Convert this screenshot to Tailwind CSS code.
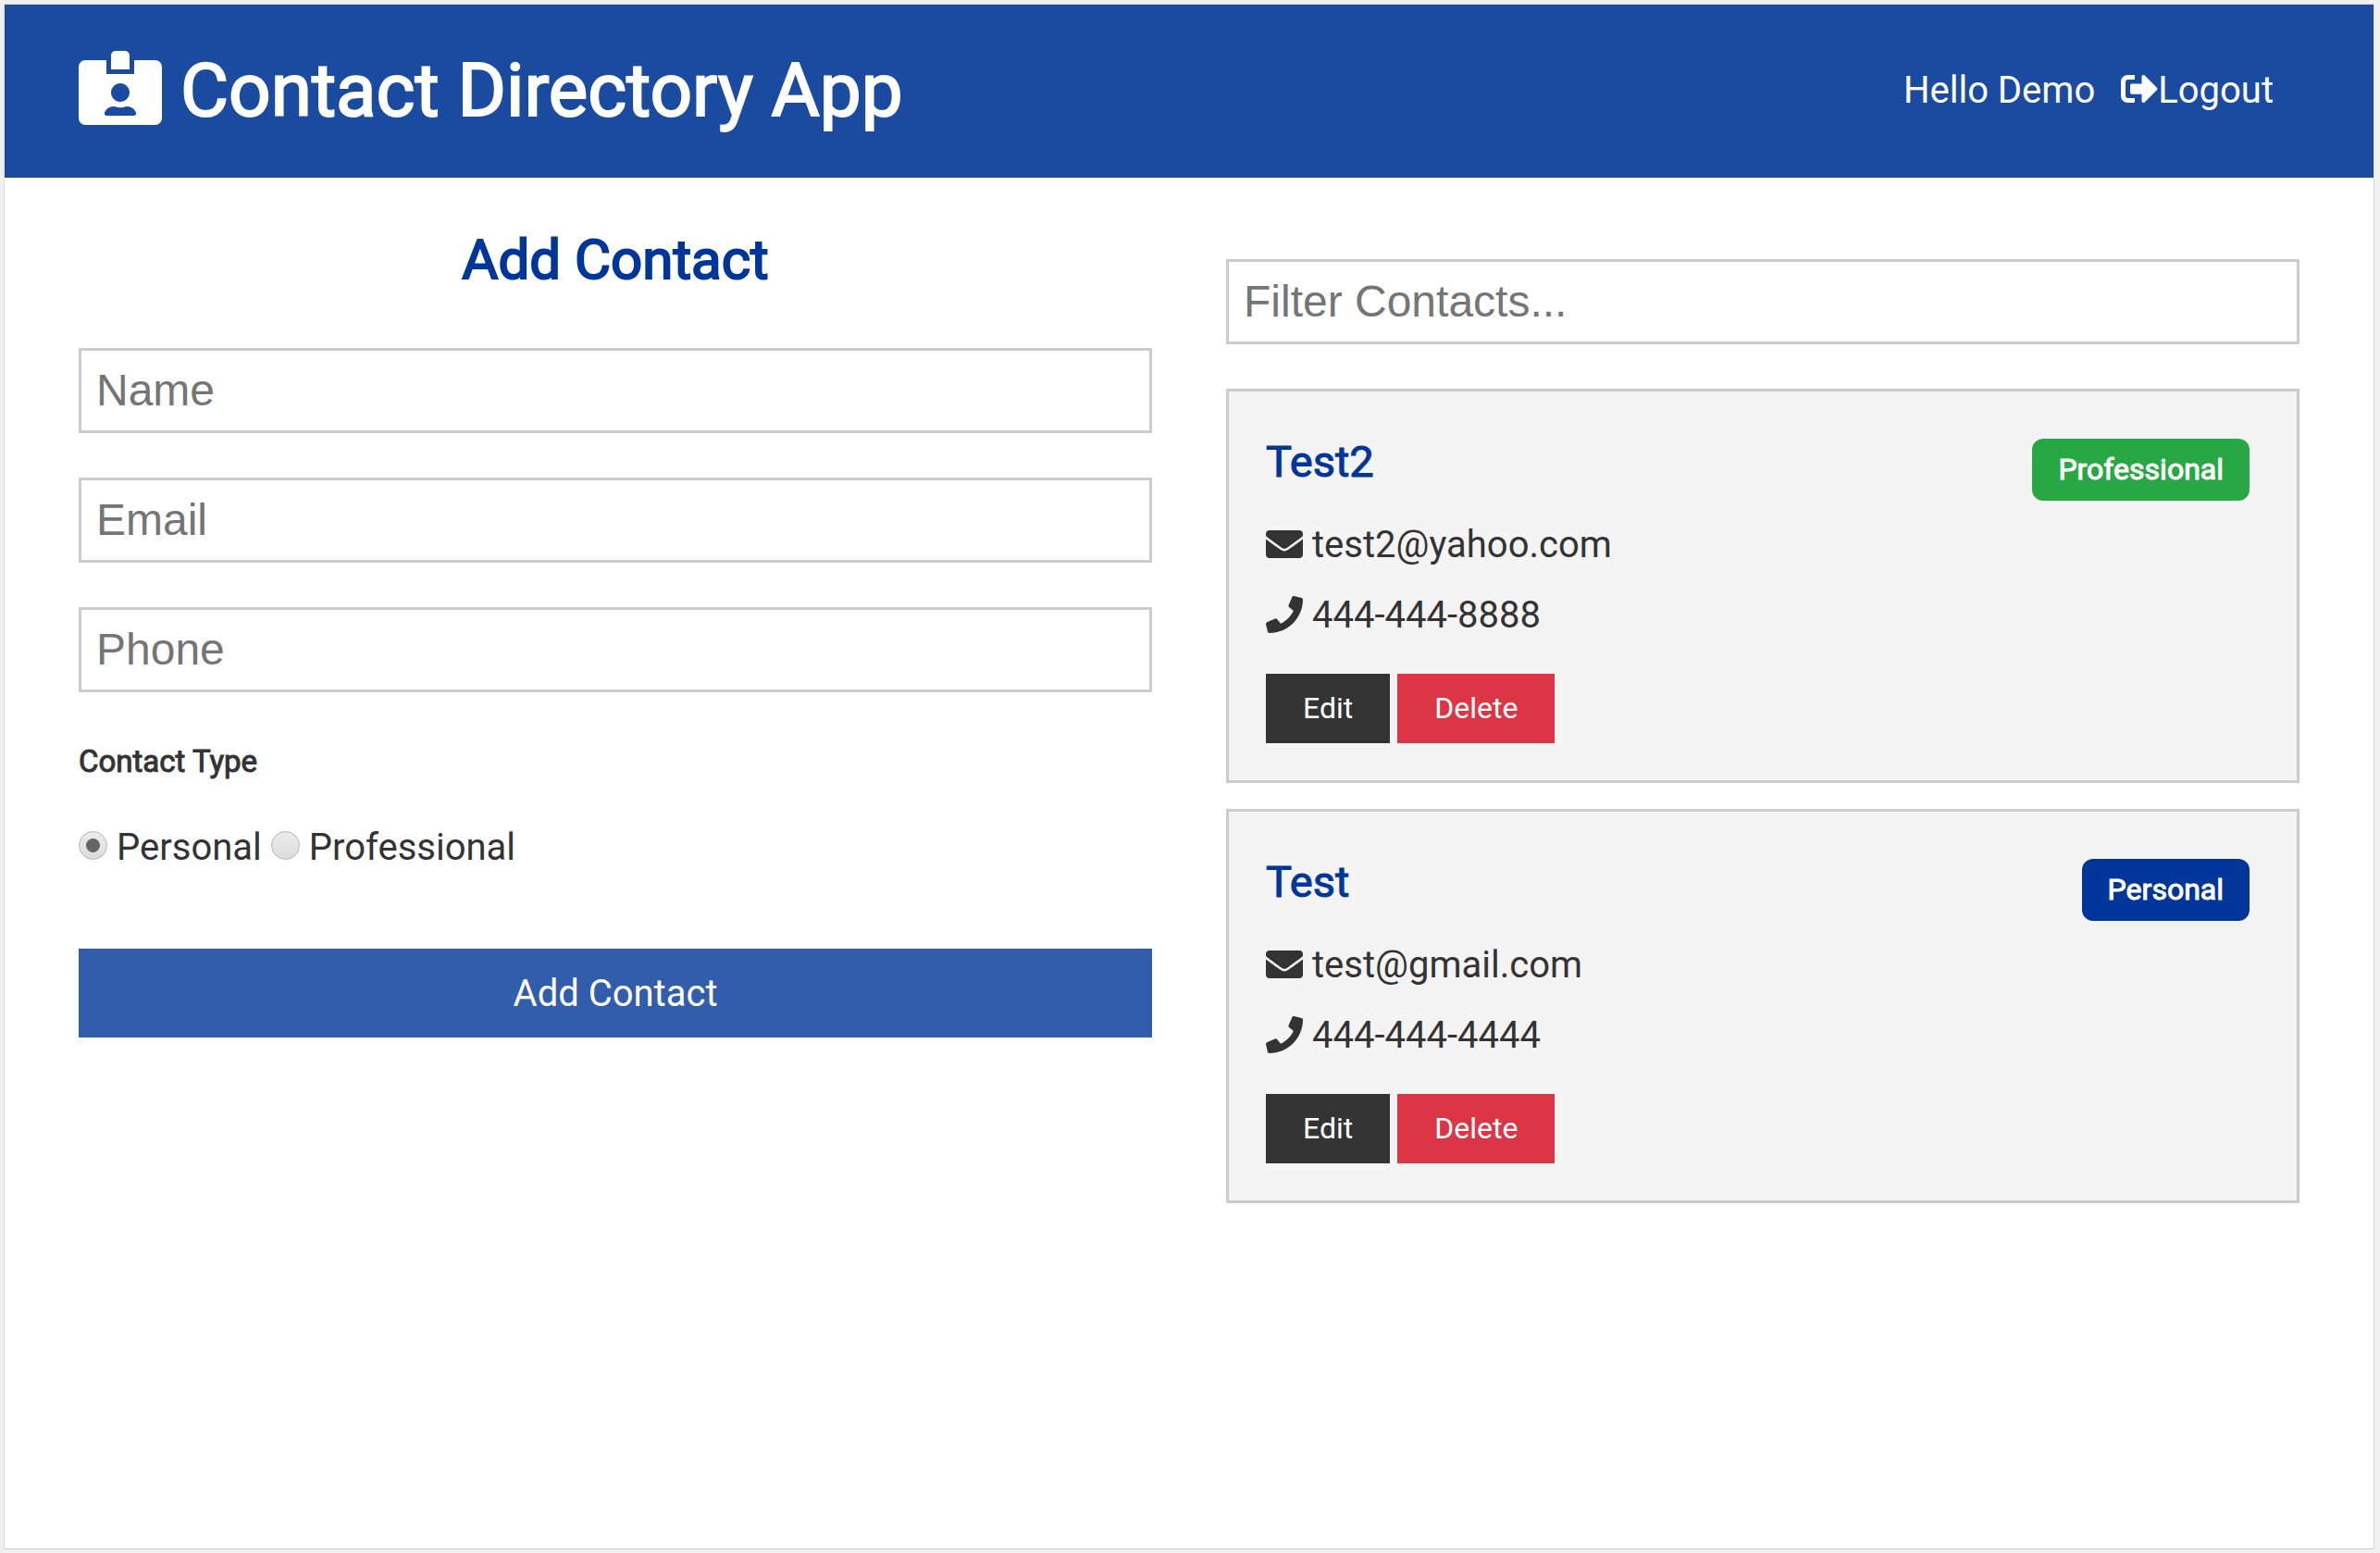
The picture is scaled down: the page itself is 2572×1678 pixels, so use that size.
<!DOCTYPE html>
<html lang="en">
<head>
<meta charset="utf-8">
<meta name="viewport" content="width=device-width, initial-scale=1">
<title>Contact Directory App</title>
<script src="https://cdn.jsdelivr.net/npm/@tailwindcss/browser@4"></script>
</head>
<body class="flex min-h-screen bg-[#f0f0f0] pt-[5px] pr-[7px] pb-[5px] pl-[5px] font-[Roboto,sans-serif] text-[40px] leading-[64px] text-[#333]">
<svg class="hidden" aria-hidden="true">
  <symbol id="icon-envelope" viewBox="0 0 512 512"><path d="M502.3 190.8c3.9-3.1 9.7-.2 9.7 4.7V400c0 26.5-21.5 48-48 48H48c-26.5 0-48-21.5-48-48V195.6c0-5 5.7-7.8 9.7-4.7 22.4 17.4 52.1 39.5 154.1 113.6 21.1 15.4 56.7 47.8 92.2 47.6 35.7.3 72-32.8 92.3-47.6 102-74.1 131.6-96.3 154-113.7zM256 320c23.2.4 56.6-29.2 73.4-41.4 132.7-96.3 142.8-104.7 173.4-128.7 5.8-4.5 9.2-11.5 9.2-18.9v-19c0-26.5-21.5-48-48-48H48c-26.5 0-48 21.5-48 48v19c0 7.4 3.4 14.3 9.2 18.9 30.6 23.9 40.7 32.4 173.4 128.7 16.8 12.2 50.2 41.8 73.4 41.4z"/></symbol>
  <symbol id="icon-phone" viewBox="0 0 512 512"><path d="M493.4 24.6l-104-24c-11.3-2.6-22.9 3.3-27.5 13.9l-48 112c-4.2 9.8-1.4 21.3 6.9 28l60.6 49.6c-36 76.7-98.9 140.5-177.2 177.2l-49.6-60.6c-6.8-8.3-18.2-11.1-28-6.9l-112 48C3.9 366.5-2 378.1.6 389.4l24 104C27.1 504.2 36.7 512 48 512c256.1 0 464-207.5 464-464 0-11.2-7.7-20.9-18.6-23.4z"/></symbol>
</svg>
<div class="min-w-0 grow bg-white shadow-[0_1px_0_0_#cccccc,0_0_0_1px_#dddddd]">
  <header class="flex items-center justify-between bg-[#1b4ba1] py-7 pr-[108px] pl-20 text-white">
    <h1 class="flex items-center gap-5 text-[80px] leading-[131px] [-webkit-text-stroke:2px]">
      <svg class="mb-2 h-20 w-[90px] shrink-0 [-webkit-text-stroke:0]" viewBox="0 0 576 512" fill="currentColor" aria-hidden="true"><path d="M528 64H384v96H192V64H48C21.5 64 0 85.5 0 112v352c0 26.500 21.500 48 48 48h480c26.500 0 48-21.500 48-48V112c0-26.500-21.500-48-48-48zM288 224c35.300 0 64 28.700 64 64s-28.700 64-64 64-64-28.700-64-64 28.700-64 64-64zm93.300 224H194.700c-10.400 0-18.800-10-15.600-19.800 8.300-25.600 32.400-44.200 60.900-44.200h8.200c12.300 5.100 25.700 8 39.800 8s27.600-2.900 39.800-8h8.200c28.400 0 52.500 18.500 60.900 44.200 3.200 9.900-5.200 19.800-15.600 19.800zM352 32c0-17.700-14.300-32-32-32h-64c-17.700 0-32 14.300-32 32v96h128V32z"/></svg>
      Contact Directory App
    </h1>
    <nav class="flex items-center gap-7 pb-0.5">
      <span>Hello Demo</span>
      <a href="#" class="flex items-center">
        <svg class="mb-1 size-10 shrink-0" viewBox="0 0 512 512" fill="currentColor" aria-hidden="true"><path d="M497 273L329 441c-15 15-41 4.500-41-17v-96H152c-13.300 0-24-10.700-24-24v-96c0-13.300 10.700-24 24-24h136V88c0-21.400 25.900-32 41-17l168 168c9.300 9.400 9.300 24.600 0 34zM192 436v-40c0-6.600-5.400-12-12-12H96c-17.700 0-32-14.300-32-32V160c0-17.700 14.300-32 32-32h84c6.600 0 12-5.400 12-12V76c0-6.600-5.400-12-12-12H96c-53 0-96 43-96 96v192c0 53 43 96 96 96h84c6.600 0 12-5.400 12-12z"/></svg>
        Logout
      </a>
    </nav>
  </header>

  <main class="grid grid-cols-2 gap-20 px-20 pt-10">
    <form>
      <h2 class="mb-[46px] text-center text-[60px] leading-[98px] text-[#003699] [-webkit-text-stroke:2px]">Add Contact</h2>
      <div class="grid gap-12">
        <input type="text" aria-label="Name" placeholder="Name" class="h-[92px] w-full border-3 border-[#ccc] px-4 pb-0.5 font-['Liberation_Sans',sans-serif] text-[48px] leading-[54px] placeholder:text-[#757575]">
        <input type="email" aria-label="Email" placeholder="Email" class="h-[92px] w-full border-3 border-[#ccc] px-4 pb-0.5 font-['Liberation_Sans',sans-serif] text-[48px] leading-[54px] placeholder:text-[#757575]">
        <input type="tel" aria-label="Phone" placeholder="Phone" class="h-[92px] w-full border-3 border-[#ccc] px-4 pb-0.5 font-['Liberation_Sans',sans-serif] text-[48px] leading-[54px] placeholder:text-[#757575]">
      </div>
      <fieldset class="mt-12">
        <legend class="mb-[35px] text-[33px] leading-[53px] [-webkit-text-stroke:1px]">Contact Type</legend>
        <div class="flex gap-2.5">
          <label class="flex items-center gap-2.5"><input type="radio" name="type" checked class="mb-1.5 grid size-[31px] appearance-none place-content-center rounded-full border-1 border-[#b4b4b4] bg-linear-to-b from-[#ececec] to-[#dcdcdc] before:size-[15px] before:rounded-full checked:before:bg-[#666]">Personal</label>
          <label class="flex items-center gap-2.5"><input type="radio" name="type" class="mb-1.5 grid size-[31px] appearance-none place-content-center rounded-full border-1 border-[#b4b4b4] bg-linear-to-b from-[#ececec] to-[#dcdcdc] before:size-[15px] before:rounded-full checked:before:bg-[#666]">Professional</label>
        </div>
      </fieldset>
      <button type="submit" class="mt-[77px] block w-full bg-[#325dad] pt-[17px] pb-[15px] text-white">Add Contact</button>
    </form>

    <section class="pt-12">
      <input type="text" aria-label="Filter contacts" placeholder="Filter Contacts..." class="block h-[92px] w-full border-3 border-[#ccc] px-4 pb-0.5 font-['Liberation_Sans',sans-serif] text-[48px] leading-[54px] placeholder:text-[#757575]">
      <div class="mt-12 grid gap-7">
        <article class="border-3 border-[#ccc] bg-[#f4f4f4] p-10">
          <div class="mb-4 flex items-start justify-between">
            <h3 class="text-[47px] leading-[72px] text-[#003699] [-webkit-text-stroke:1px]">Test2</h3>
            <span class="mt-[11px] mr-[11px] rounded-xl bg-[#28a745] px-7 py-[7px] text-[32px] leading-[53px] text-white [-webkit-text-stroke:1px]">Professional</span>
          </div>
          <ul class="grid gap-3">
            <li class="flex items-center gap-2.5"><svg class="mb-0.5 size-10 shrink-0" fill="currentColor" aria-hidden="true"><use href="#icon-envelope"/></svg>test2@yahoo.com</li>
            <li class="flex items-center gap-2.5"><svg class="mb-0.5 size-10 shrink-0" fill="currentColor" aria-hidden="true"><use href="#icon-phone"/></svg>444-444-8888</li>
          </ul>
          <div class="mt-[31px] flex gap-2 text-[32px] leading-[51px] text-white">
            <button type="button" class="bg-[#333] px-10 py-3">Edit</button>
            <button type="button" class="bg-[#dc3545] px-10 py-3">Delete</button>
          </div>
        </article>
        <article class="border-3 border-[#ccc] bg-[#f4f4f4] p-10">
          <div class="mb-4 flex items-start justify-between">
            <h3 class="text-[47px] leading-[72px] text-[#003699] [-webkit-text-stroke:1px]">Test</h3>
            <span class="mt-[11px] mr-[11px] rounded-xl bg-[#003699] px-7 py-[7px] text-[32px] leading-[53px] text-white [-webkit-text-stroke:1px]">Personal</span>
          </div>
          <ul class="grid gap-3">
            <li class="flex items-center gap-2.5"><svg class="mb-0.5 size-10 shrink-0" fill="currentColor" aria-hidden="true"><use href="#icon-envelope"/></svg>test@gmail.com</li>
            <li class="flex items-center gap-2.5"><svg class="mb-0.5 size-10 shrink-0" fill="currentColor" aria-hidden="true"><use href="#icon-phone"/></svg>444-444-4444</li>
          </ul>
          <div class="mt-[31px] flex gap-2 text-[32px] leading-[51px] text-white">
            <button type="button" class="bg-[#333] px-10 py-3">Edit</button>
            <button type="button" class="bg-[#dc3545] px-10 py-3">Delete</button>
          </div>
        </article>
      </div>
    </section>
  </main>
</div>
</body>
</html>
